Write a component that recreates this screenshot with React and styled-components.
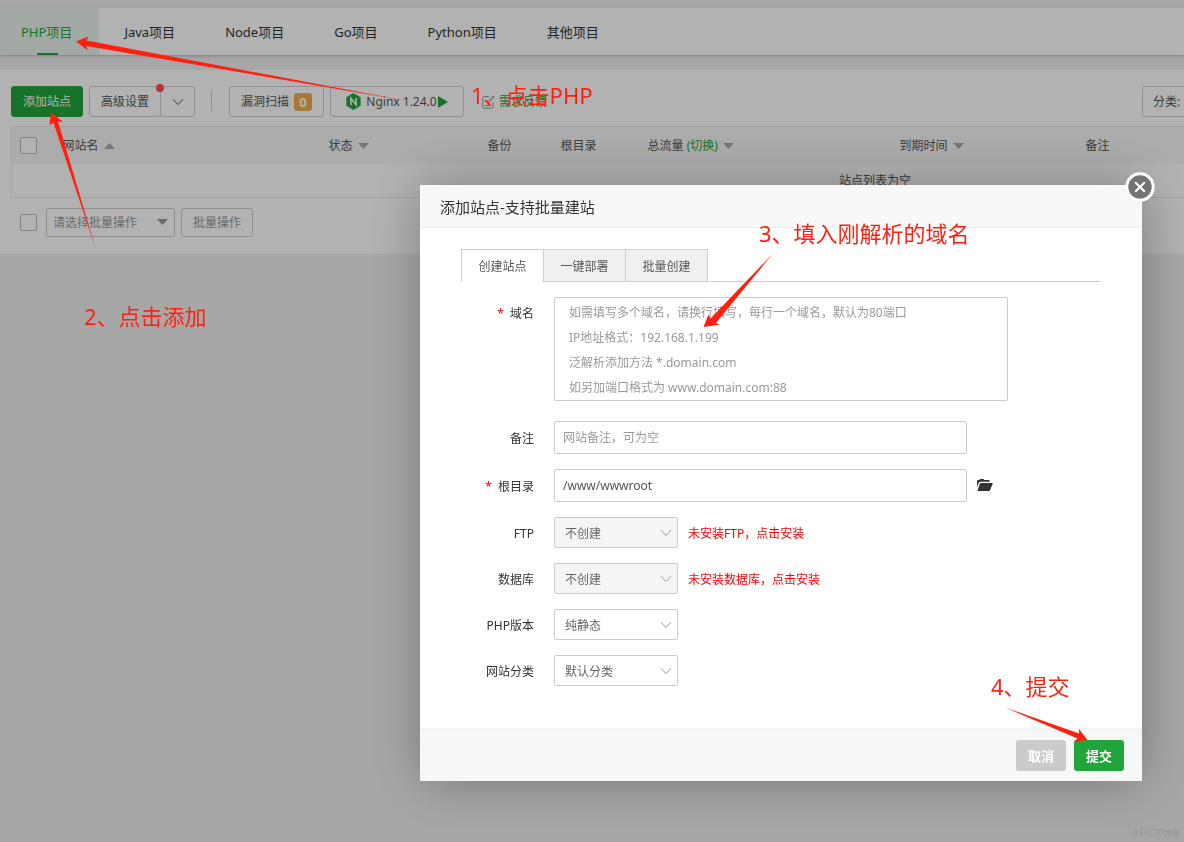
import * as React from "react";
import styled, { createGlobalStyle } from "styled-components";

const projects = ["PHP项目", "Java项目", "Node项目", "Go项目", "Python项目", "其他项目"];

const domainHint = `如需填写多个域名，请换行填写，每行一个域名，默认为80端口
IP地址格式：192.168.1.199
泛解析添加方法 *.domain.com
如另加端口格式为 www.domain.com:88`;

const selects = [
  { id: "ftp", label: "FTP", value: "不创建", muted: true, hint: "未安装FTP，点击安装" },
  { id: "database", label: "数据库", value: "不创建", muted: true, hint: "未安装数据库，点击安装" },
  { id: "php", label: "PHP版本", value: "纯静态" },
  { id: "category", label: "网站分类", value: "默认分类" },
];

const Chevron = () => (
  <svg width="12" height="8" viewBox="0 0 12 8" fill="none" stroke="currentColor">
    <path d="M1 1.2 6 6.6 11 1.2" />
  </svg>
);

const Caret = ({ up }) => (
  <svg width="11" height="6" viewBox="0 0 11 6" fill="currentColor">
    <path d={up ? "M0 6 5.5 0 11 6Z" : "M0 0H11L5.5 6Z"} />
  </svg>
);

const NginxLogo = () => (
  <svg width="15" height="17" viewBox="0 0 15 17">
    <path d="M7.5 0 14.6 4.2V12.8L7.5 17 .4 12.8V4.2Z" fill="#20a53a" />
    <path d="M4.9 12V5.2L10.1 11.8V5" fill="none" stroke="#fff" strokeWidth="1.6" />
  </svg>
);

const FeedbackIcon = () => (
  <svg width="13" height="14" viewBox="0 0 13 14" fill="none" stroke="#999">
    <path d="M7 1.5H2.2Q.8 1.5.8 2.9V11.8Q.8 13.2 2.2 13.2H9.6Q11 13.2 11 11.8V7" />
    <path d="M5.6 8.2 6 6.4 11.2 1 12.2 2 7.2 7.5Z" />
    <path d="M3 5.5H5M3 10.5H8.5" />
  </svg>
);

const FolderIcon = () => (
  <svg width="16" height="13" viewBox="0 0 16 13" fill="#333">
    <path d="M0 8V2Q0 1 1 1H2.2L3 0H6.5L7.2 1H11.8Q12.6 1 12.6 2V2.7H3.6Q2.3 2.7 1.8 3.8Z" />
    <path d="M3.8 4H15.2Q16 4 15.6 5L13 11.2Q12.7 12 11.9 12H.9Q.3 12 .6 11.2L2.9 4.6Q3.1 4 3.8 4Z" />
  </svg>
);

const App = () => {
  const [root, setRoot] = React.useState("/www/wwwroot");

  return (
    <>
      <GlobalStyle />
      <Nav>
        {projects.map((name, index) => (
          <NavLink href="#" key={name} $active={index === 0}>
            {name}
          </NavLink>
        ))}
      </Nav>

      <Panel>
        <Toolbar>
          <AddButton type="button">添加站点</AddButton>
          <ButtonGroup>
            <PlainButton type="button">高级设置</PlainButton>
            <PlainButton type="button" aria-label="更多设置">
              <Chevron />
            </PlainButton>
            <Dot />
          </ButtonGroup>
          <Divider />
          <ScanButton type="button">
            漏洞扫描<Count>0</Count>
          </ScanButton>
          <NginxButton type="button">
            <NginxLogo />
            <span>Nginx 1.24.0</span>
            <svg width="10" height="12" viewBox="0 0 10 12" fill="#20a53a">
              <path d="M0 0 10 6 0 12Z" />
            </svg>
          </NginxButton>
          <Feedback href="#">
            <FeedbackIcon />
            需求反馈
          </Feedback>
          <Filter type="button">分类:</Filter>
        </Toolbar>

        <SiteTable>
          <colgroup>
            <Col $width={41} />
            <Col $width={266} />
            <Col $width={159} />
            <Col $width={73} />
            <Col $width={87} />
            <Col $width={252} />
            <Col $width={186} />
            <col />
          </colgroup>
          <thead>
            <tr>
              <th>
                <Check type="checkbox" aria-label="全选" />
              </th>
              <th>
                网站名 <Caret up />
              </th>
              <th>
                状态 <Caret />
              </th>
              <th>备份</th>
              <th>根目录</th>
              <th>
                总流量 <a href="#">(切换)</a> <Caret />
              </th>
              <th>
                到期时间 <Caret />
              </th>
              <th>备注</th>
            </tr>
          </thead>
          <tbody>
            <tr>
              <td colSpan="8">站点列表为空</td>
            </tr>
          </tbody>
        </SiteTable>

        <BatchBar>
          <Check type="checkbox" aria-label="选择全部站点" />
          <BatchSelect>
            <select aria-label="批量操作" defaultValue="请选择批量操作">
              <option>请选择批量操作</option>
            </select>
            <Caret />
          </BatchSelect>
          <BatchButton type="button">批量操作</BatchButton>
        </BatchBar>
      </Panel>

      <Overlay>
        <Modal role="dialog" aria-labelledby="modal-title">
          <Close type="button" aria-label="关闭">
            <svg width="30" height="30" viewBox="0 0 30 30">
              <circle cx="15" cy="15" r="13.2" fill="#737373" stroke="#fff" strokeWidth="3" />
              <path d="M10.2 10.2 19.8 19.8M19.8 10.2 10.2 19.8" stroke="#fff" strokeWidth="2" />
            </svg>
          </Close>
          <Title id="modal-title">添加站点-支持批量建站</Title>
          <Body>
            <Tabs role="tablist">
              {["创建站点", "一键部署", "批量创建"].map((tab, index) => (
                <Tab
                  type="button"
                  role="tab"
                  key={tab}
                  aria-selected={index === 0}
                  $active={index === 0}
                >
                  {tab}
                </Tab>
              ))}
            </Tabs>
            <Form>
              <Field $top>
                <Label htmlFor="domain" $required>
                  域名
                </Label>
                <DomainInput id="domain" placeholder={domainHint} />
              </Field>
              <Field>
                <Label htmlFor="remark">备注</Label>
                <TextInput id="remark" placeholder="网站备注，可为空" />
              </Field>
              <Field>
                <Label htmlFor="root-dir" $required>
                  根目录
                </Label>
                <TextInput
                  id="root-dir"
                  value={root}
                  onChange={(event) => setRoot(event.target.value)}
                />
                <FolderButton type="button" aria-label="选择目录">
                  <FolderIcon />
                </FolderButton>
              </Field>
              {selects.map(({ id, label, value, muted, hint }) => (
                <Field key={id}>
                  <Label htmlFor={id}>{label}</Label>
                  <SelectBox $muted={muted}>
                    <select id={id} defaultValue={value}>
                      <option>{value}</option>
                    </select>
                    <Chevron />
                  </SelectBox>
                  {hint && <Hint href="#">{hint}</Hint>}
                </Field>
              ))}
            </Form>
          </Body>
          <Footer>
            <FooterButton type="button">取消</FooterButton>
            <FooterButton type="button" $primary>
              提交
            </FooterButton>
          </Footer>
        </Modal>
      </Overlay>

      <Notes>
        <svg width="1184" height="842" viewBox="0 0 1184 842" fill="#ff2010">
          <path d="M76 41.5 88.5 36.5 86.5 40.5 410 101.5 86 46 88 50.5Z" />
          <path d="M51 112 63 122 58 121.5 95.5 248 53.5 123 49.5 125Z" />
          <path d="M703.5 327 708.5 314.5 710.5 318.5 772.5 254 716 323 720 324.5Z" />
          <path d="M1087.5 740 1079 729 1079 733.5 1005 707.5 1077.5 738.5 1074 741.5Z" />
        </svg>
        <Note $x={471} $y={79}>1、点击PHP</Note>
        <Note $x={84} $y={300}>2、点击添加</Note>
        <Note $x={759} $y={217}>3、填入刚解析的域名</Note>
        <Note $x={991} $y={670}>4、提交</Note>
      </Notes>
      <Watermark>@51CTO博客</Watermark>
    </>
  );
};

const GlobalStyle = createGlobalStyle`
  * {
    box-sizing: border-box;
  }

  body {
    margin: 0;
    padding-top: 8px;
    min-height: 100vh;
    overflow: hidden;
    background-color: #f0f0f0;
    color: #555;
    font-family: "Noto Sans", "Noto Sans CJK SC", sans-serif;
    font-size: 12px;
    line-height: 18px;
  }

  button, input, select, textarea {
    font: inherit;
    color: inherit;
    margin: 0;
  }

  button {
    cursor: pointer;
    white-space: nowrap;
  }

  a {
    color: #20a53a;
    text-decoration: none;
  }

  svg {
    flex: none;
  }
`;

const Nav = styled.nav`
  display: flex;
  height: 47px;
  background-color: #fff;
  box-shadow: 0 1px 3px rgba(0, 0, 0, 0.25);
`;

const NavLink = styled.a`
  position: relative;
  display: flex;
  align-items: center;
  padding: 0 25px;
  font-size: 13px;
  color: ${({ $active }) => ($active ? "#20a53a" : "#333")};
  background-color: ${({ $active }) => ($active ? "#e9f3ed" : "transparent")};

  &:first-child {
    padding: 0 27px 0 21px;
  }

  &::after {
    content: "";
    display: ${({ $active }) => ($active ? "block" : "none")};
    position: absolute;
    left: 37px;
    bottom: 0;
    width: 21px;
    height: 2px;
    background-color: #20a53a;
  }
`;

const Panel = styled.main`
  height: 184px;
  margin-top: 15px;
  padding: 15px 0 0 11px;
  overflow: hidden;
  background-color: #fff;
`;

const Toolbar = styled.div`
  display: flex;
  align-items: center;
  height: 32px;
  margin-bottom: 9px;
`;

const PlainButton = styled.button`
  display: flex;
  align-items: center;
  justify-content: center;
  height: 31px;
  padding: 1px 10px 0;
  background-color: #fff;
  border: 1px solid #ccc;
  border-radius: 3px;
`;

const AddButton = styled(PlainButton)`
  width: 72px;
  margin-right: 6px;
  background-color: #20a53a;
  border-color: #20a53a;
  color: #fff;
`;

const ButtonGroup = styled.div`
  position: relative;
  display: flex;

  button:first-child {
    width: 72px;
  }

  button + button {
    width: 35px;
    margin-left: -1px;
  }
`;

const Dot = styled.span`
  position: absolute;
  top: -2px;
  left: 67px;
  width: 8px;
  height: 8px;
  border-radius: 50%;
  background-color: #ff4d4f;
`;

const Divider = styled.span`
  width: 1px;
  height: 20px;
  margin: 0 17px 0 16px;
  background-color: #ccc;
`;

const ScanButton = styled(PlainButton)`
  width: 95px;
  margin-right: 6px;
`;

const Count = styled.span`
  width: 18px;
  margin-left: 5px;
  border-radius: 3px;
  background-color: #f0ad4e;
  color: #fff;
  font-size: 13px;
  font-weight: 700;
`;

const NginxButton = styled(PlainButton)`
  width: 134px;

  span {
    margin: 0 1px 0 5px;
  }
`;

const Feedback = styled.a`
  display: flex;
  align-items: center;
  gap: 4px;
  margin-left: 18px;
  padding-top: 1px;
`;

const Filter = styled(PlainButton)`
  justify-content: flex-start;
  width: 82px;
  margin-left: auto;
  margin-right: -40px;
`;

const SiteTable = styled.table`
  width: 1220px;
  table-layout: fixed;
  border-collapse: collapse;
  border: 1px solid #eaeaea;

  th, td {
    padding: 2px 10px 0;
    font-weight: 400;
    text-align: left;
    white-space: nowrap;
  }

  th {
    height: 37px;
    background-color: #f6f6f6;
  }

  th:first-child {
    padding: 0 0 0 8px;
  }

  th svg {
    margin-left: 2px;
    color: #aaa;
    vertical-align: 1px;
  }

  td {
    height: 34px;
    padding-left: 518px;
    text-align: center;
  }
`;

const Col = styled.col`
  width: ${({ $width }) => $width}px;
`;

const Check = styled.input`
  appearance: none;
  display: block;
  flex: none;
  width: 17px;
  height: 17px;
  background-color: #fff;
  border: 1px solid #bbb;
  border-radius: 2px;
`;

const BatchBar = styled.div`
  display: flex;
  align-items: center;
  padding: 10px 0 0 9px;
  color: #999;
`;

const BatchSelect = styled.div`
  position: relative;
  width: 129px;
  margin: 0 6px 0 9px;

  select {
    appearance: none;
    width: 100%;
    height: 29px;
    padding: 0 6px;
    background-color: #fff;
    border: 1px solid #ccc;
    border-radius: 2px;
  }

  svg {
    position: absolute;
    top: 11px;
    right: 7px;
    pointer-events: none;
  }
`;

const BatchButton = styled(PlainButton)`
  width: 72px;
  height: 29px;
`;

const Overlay = styled.div`
  position: fixed;
  inset: 0;
  display: flex;
  align-items: flex-start;
  padding: 185px 42px 0 420px;
  background-color: rgba(0, 0, 0, 0.3);
`;

const Modal = styled.section`
  position: relative;
  flex: 1;
  background-color: #fff;
  box-shadow: 1px 1px 50px rgba(0, 0, 0, 0.3);
`;

const Close = styled.button`
  position: absolute;
  top: -13px;
  right: -13px;
  padding: 0;
  line-height: 0;
  border: none;
  background: none;
`;

const Title = styled.h1`
  height: 43px;
  margin: 0;
  padding: 0 20px;
  border-bottom: 1px solid #eee;
  background-color: #f8f8f8;
  color: #333;
  font-size: 15px;
  font-weight: 400;
  line-height: 44px;
`;

const Body = styled.div`
  padding: 21px 41px 42px;
`;

const Tabs = styled.div`
  display: flex;
  border-bottom: 1px solid #ccd;
`;

const Tab = styled.button`
  width: 83px;
  height: 33px;
  padding: 3px 0 0;
  margin-bottom: -1px;
  border: 1px solid #ccd;
  border-bottom-color: ${({ $active }) => ($active ? "#fff" : "#ccd")};
  background-color: ${({ $active }) => ($active ? "#fff" : "#f0f0f0")};

  & + & {
    margin-left: -1px;
  }
`;

const Form = styled.form`
  display: flex;
  flex-direction: column;
  gap: 15px;
  padding-top: 15px;
`;

const Field = styled.div`
  display: flex;
  align-items: ${({ $top }) => ($top ? "flex-start" : "center")};
  min-height: 31px;

  label {
    padding-top: ${({ $top }) => ($top ? "8px" : "2px")};
  }
`;

const Label = styled.label`
  width: 73px;
  margin-right: 20px;
  color: #333;
  text-align: right;

  &::before {
    content: ${({ $required }) => ($required ? '"*"' : "none")};
    margin-right: 6px;
    color: #f00;
  }
`;

const TextInput = styled.input`
  width: 413px;
  height: 33px;
  padding: 0 8px;
  border: 1px solid #ccc;
  border-radius: 2px;

  &::placeholder {
    color: #999;
  }
`;

const DomainInput = styled.textarea`
  width: 454px;
  height: 104px;
  margin-bottom: 5px;
  padding: 2px 14px;
  border: 1px solid #ccc;
  border-radius: 2px;
  line-height: 25px;
  resize: none;
  overflow: hidden;

  &::placeholder {
    color: #999;
  }
`;

const FolderButton = styled.button`
  margin-left: 10px;
  padding: 0;
  border: none;
  background: none;
  line-height: 0;
`;

const SelectBox = styled.div`
  position: relative;
  width: 124px;
  color: #666;

  select {
    appearance: none;
    display: block;
    width: 100%;
    height: 31px;
    padding: 2px 10px 0;
    border: 1px solid #ccc;
    border-radius: 2px;
    background-color: ${({ $muted }) => ($muted ? "#f5f5f5" : "#fff")};
  }

  svg {
    position: absolute;
    top: 12px;
    right: 6px;
    color: #999;
    pointer-events: none;
  }
`;

const Hint = styled.a`
  margin-left: 10px;
  padding-top: 2px;
  color: #f00;
`;

const Footer = styled.footer`
  display: flex;
  justify-content: flex-end;
  gap: 8px;
  padding: 11px 18px 10px;
  border-top: 1px solid #edf1f2;
  background-color: #f6f8f8;
`;

const FooterButton = styled.button`
  width: 50px;
  height: 31px;
  padding: 0;
  border: none;
  border-radius: 3px;
  background-color: ${({ $primary }) => ($primary ? "#20a53a" : "#cbcbcb")};
  color: #fff;
  font-size: 13px;
  font-weight: 700;
`;

const Notes = styled.div`
  position: fixed;
  inset: 0;
  pointer-events: none;
`;

const Note = styled.span`
  position: absolute;
  left: ${({ $x }) => $x}px;
  top: ${({ $y }) => $y}px;
  color: #ff2010;
  font-size: 22px;
  line-height: 32px;
  white-space: nowrap;
`;

const Watermark = styled.span`
  position: fixed;
  right: 4px;
  bottom: 0;
  color: #8c8c8c;
  font-size: 8px;
  text-shadow: 0 0 1px #bbb;
`;

export default App;
